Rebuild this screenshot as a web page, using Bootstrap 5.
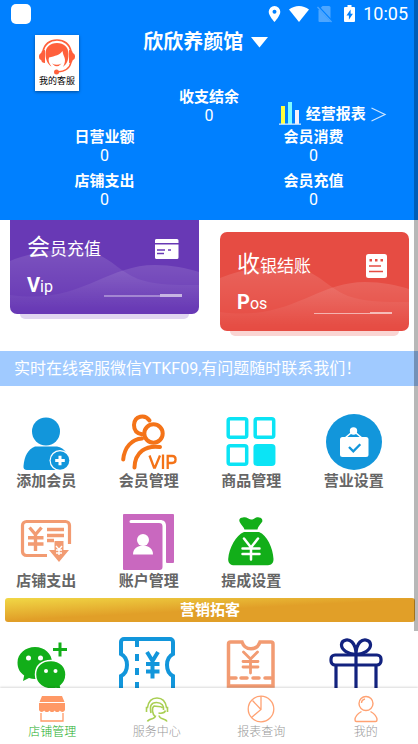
<!DOCTYPE html>
<html lang="zh-CN">
<head>
<meta charset="utf-8">
<meta name="viewport" content="width=device-width, initial-scale=1">
<title>欣欣养颜馆</title>
<link href="https://cdn.jsdelivr.net/npm/bootstrap@5.3.0/dist/css/bootstrap.min.css" rel="stylesheet">
<style>
  body { font-family: Roboto, "Noto Sans CJK SC", sans-serif; background: #fff; }
  svg { display: block; flex: none; overflow: visible; }
  .app-head { background: #0080ff; padding-bottom: 11px; }
  .status-row { height: 28px; padding: 0 10px 0 11px; }
  .app-dot { width: 20px; height: 20px; border-radius: 5px; }
  .clock { font-size: 18px; line-height: 28px; }
  .service-btn { margin: 7px 0 0 35px; width: 44px; height: 56px; box-shadow: 0 1px 3px rgba(0,0,0,.4); font-size: 9px; line-height: 12px; }
  .shop-btn { font-size: 20px; line-height: 28px; }
  .stat-name { font-size: 15px; line-height: 20px; font-weight: 700; }
  .stat-num { font-size: 16px; line-height: 18px; }
  .balance { margin-top: 31px; margin-bottom: 2px; }
  .report-link { font-size: 15px; line-height: 24px; gap: 5px; margin-bottom: 1px; }
  .stats-gap { row-gap: 6px; }

  .promo { padding: 0 9px 20px 10px; column-gap: 21px; }
  .tile { flex: 1 1 0; height: 94px; padding: 0 17px; border-radius: 0 0 7px 7px; background: #6839b5; isolation: isolate; }
  .tile-pos { height: 99px; margin-top: 12px; border-radius: 7px; background: #e64c43; }
  .tile::after { content: ""; position: absolute; left: 10px; right: 10px; bottom: -5px; height: 5px; border-radius: 0 0 5px 5px; background: #e0d6f0; }
  .tile-pos::after { background: #fad5d3; }
  .tile-waves { position: absolute; inset: 0; z-index: -1; }
  .tile-title { font-size: 17px; line-height: 30px; margin-bottom: 8px; }
  .tile-title .initial { font-size: 23px; }
  .tile-sub { font-size: 16px; line-height: 26px; margin-bottom: 14px; }
  .tile-sub .initial { font-size: 20px; font-weight: 700; }

  .notice { background: #a0caff; font-size: 16px; line-height: 35px; padding-left: 14px; }
  .menu-grid { display: grid; grid-template-columns: repeat(4, 1fr); gap: 22px 10px; padding: 28px 18px 6px 0; }
  .menu-grid a { color: #666; font-size: 15px; line-height: 22px; font-weight: 700; }
  .menu-more { padding-top: 16px; }
  .section-bar { margin: 0 3px 0 5px; border-radius: 3px; font-size: 15px; line-height: 24px; background: linear-gradient(177deg, #f1d846 0%, #e19f28 50%); }
  .scroll-thumb { position: absolute; top: 0; right: 0; width: 4px; height: 631px; background: rgba(0,0,0,.28); }

  .tab-row { height: 56px; background: #fff; box-shadow: 0 -1px 2px rgba(0,0,0,.15); z-index: 2; }
  .tab-row a { color: #999; font-size: 12px; line-height: 16px; font-weight: 300; padding-top: 7px; gap: 1px; }
  .tab-row a.current { color: #1aad28; }
</style>
<script src="https://cdn.jsdelivr.net/npm/bootstrap@5.3.0/dist/js/bootstrap.bundle.min.js"></script>
</head>
<body class="vh-100 d-flex flex-column overflow-hidden">
<main class="flex-fill overflow-hidden position-relative">
  <header class="app-head text-white">
    <div class="status-row d-flex align-items-center">
      <span class="app-dot bg-white me-auto"></span>
      <svg width="13" height="18" viewBox="0 0 13 18" fill="#fff"><path fill-rule="evenodd" d="M6.500 1a5.800 5.800 0 0 0-5.800 5.800C.7 11 6.500 17 6.500 17s5.800-6 5.800-10.200A5.800 5.800 0 0 0 6.500 1zm0 3.800a2 2 0 1 1 0 4 2 2 0 0 1 0-4z"/></svg>
      <svg class="ms-2" width="20" height="18" viewBox="0 0 20 18" fill="#fff"><path d="M10 17 0 4.500C6-.3 14-.3 20 4.500z"/></svg>
      <svg class="ms-2" width="15" height="18" viewBox="0 0 15 18"><path d="M5.500 1H12a1.500 1.500 0 0 1 1.500 1.500V16a1 1 0 0 1-1 1h-10a1 1 0 0 1-1-1V5z" fill="#4da6ff"/><path d="M.5 1 14.500 16" stroke="#0080ff" stroke-width="2.500"/><path d="M.5 2 14.500 17" stroke="#4da6ff" stroke-width="1.300"/></svg>
      <svg class="mx-2 ps-1" width="15" height="18" viewBox="0 0 11 18"><path fill="#fff" fill-rule="evenodd" d="M3.500 0h4v2H10a1 1 0 0 1 1 1v13a1 1 0 0 1-1 1H1a1 1 0 0 1-1-1V3a1 1 0 0 1 1-1h2.500zM6.600 4.500 2.500 10.400h2.400v4.400l4-6H6.600z"/></svg>
      <span class="clock">10:05</span>
    </div>
    <div class="row g-0">
      <div class="col-4">
        <button type="button" class="service-btn btn bg-white rounded-0 border-0 p-0 text-black d-flex flex-column align-items-center justify-content-between">
          <svg class="mt-1" width="36" height="36" viewBox="0 0 36 36" fill="#ff603c"><path d="M4 13C5 5 11 1 18 1s13 4 14 12" fill="none" stroke="#ff603c" stroke-width="1.700"/><path d="M6.500 15C6.500 8 11 4 18 4s11.500 4 11.500 11c0 7-2 10-5.500 13 2-4 2.500-7 1.500-9.500C24.700 16.500 24 15 23.500 12 21 16 16 17 10 18.500c-1 3 0 6 2.500 9C9 25.500 6.500 21 6.500 15z"/><path d="M6 11v13c-2.500 0-3.500-1-3.800-3C.4 20.500 0 19 0 17.500S.4 15 2.200 14C2.500 12 3.500 11 6 11zM30 11v13c2.500 0 3.500-1 3.800-3 1.800-.5 2.200-2 2.200-3.500s-.4-2.500-2.200-3.500C33.500 12 32.500 11 30 11z"/><path d="M13 24.500q5 5.500 9.500 0-4.500 2.500-9.500 0z"/><path d="M32 23C31 30 25 32.500 18 33" fill="none" stroke="#ff603c" stroke-width="1.600"/><circle cx="17.500" cy="33" r="2.500"/></svg>
          <span class="pb-1">我的客服</span>
        </button>
      </div>
      <div class="col-4">
        <button type="button" class="shop-btn btn border-0 rounded-0 p-0 ps-1 text-white fw-bold d-flex align-items-center gap-2">欣欣养颜馆
          <svg width="17" height="11" viewBox="0 0 17 11"><path d="M0 0h17L8.500 10.500z" fill="#fff"/></svg>
        </button>
        <div class="balance text-center">
          <div class="stat-name">收支结余</div>
          <div class="stat-num">0</div>
        </div>
      </div>
      <div class="col-4 d-flex align-items-end">
        <a href="#" class="report-link text-white fw-bold text-decoration-none d-flex align-items-center">
          <svg width="22" height="24" viewBox="0 0 22 24"><path fill="#ffff3d" d="M2 4h4v18H2z"/><path fill="#7ffcff" d="M9 0h4v22H9z"/><path fill="#f8f0fa" d="M16 8h4v14h-4z"/><path fill="#d5eaff" d="M0 21.500h22v1.300H0z"/></svg>
          <span>经营报表</span>
          <svg width="15" height="15" viewBox="0 0 15 15"><path d="M.5 1 14 7.500.5 14" fill="none" stroke="#cfe6ff" stroke-width="1.200"/></svg>
        </a>
      </div>
    </div>
    <div class="row g-0 text-center stats-gap">
      <div class="col-6"><div class="stat-name">日营业额</div><div class="stat-num">0</div></div>
      <div class="col-6"><div class="stat-name">会员消费</div><div class="stat-num">0</div></div>
      <div class="col-6"><div class="stat-name">店铺支出</div><div class="stat-num">0</div></div>
      <div class="col-6"><div class="stat-name">会员充值</div><div class="stat-num">0</div></div>
    </div>
  </header>

  <section class="promo d-flex align-items-start">
    <a href="#" class="tile position-relative text-white text-decoration-none d-flex flex-column justify-content-end">
      <svg class="tile-waves w-100 h-100" viewBox="0 0 189 94" preserveAspectRatio="none"><defs><linearGradient id="fade" x1="0" y1="0" x2="0" y2="1"><stop offset="0" stop-color="#fff" stop-opacity=".13"/><stop offset="1" stop-color="#fff" stop-opacity="0"/></linearGradient></defs><path fill="url(#fade)" d="M0 41C25 31 45 29 68 30 98 32 104 49 128 59 148 66 170 65 189 65V88H0z"/><path fill="url(#fade)" d="M0 75C70 85 95 45 145 45 162 45 176 48 189 52V92H0z"/></svg>
      <div class="tile-title d-flex align-items-center justify-content-between">
        <span><span class="initial">会</span>员充值</span>
        <svg width="27" height="22" viewBox="0 0 27 22"><path fill="#fff" d="M2 1h20a1.500 1.500 0 0 1 1.500 1.500V5H0V2.500A1.500 1.500 0 0 1 2 1zM0 6.500h23.500v13A1.500 1.500 0 0 1 22 21H2a1.500 1.500 0 0 1-2-1.500z"/><path stroke="#6839b5" stroke-width="1.500" d="M2 12h8M13 12h3M2 15.500h7"/></svg>
      </div>
      <div class="tile-sub d-flex align-items-end justify-content-between">
        <span><span class="initial">V</span>ip</span>
        <svg width="78" height="10" viewBox="0 0 78 10"><path fill="#fff" fill-opacity=".35" d="M0 5h56v2H0z"/><path fill="#fff" fill-opacity=".6" d="M56 4h22v3H56z"/></svg>
      </div>
    </a>
    <a href="#" class="tile tile-pos position-relative text-white text-decoration-none d-flex flex-column justify-content-end">
      <svg class="tile-waves w-100 h-100" viewBox="0 0 189 99" preserveAspectRatio="none"><path fill="url(#fade)" d="M0 46C25 36 45 34 68 35 98 37 104 54 128 64 148 71 170 70 189 70V93H0z"/><path fill="url(#fade)" d="M0 80C70 90 95 50 145 50 162 50 176 53 189 57V97H0z"/></svg>
      <div class="tile-title d-flex align-items-center justify-content-between">
        <span><span class="initial">收</span>银结账</span>
        <svg width="26" height="24" viewBox="0 0 26 24"><rect width="21" height="24" rx="2.500" fill="#fff"/><path stroke="#e64c43" stroke-width="1.500" d="M3 12h12M3 17.500h14"/><path fill="#e64c43" d="M3.500 5h2.500v2.500H3.500zM9 5h2.500v2.500H9zM14.500 5H17v2.500h-2.500z"/></svg>
      </div>
      <div class="tile-sub d-flex align-items-end justify-content-between">
        <span><span class="initial">P</span>os</span>
        <svg width="78" height="10" viewBox="0 0 78 10"><path fill="#fff" fill-opacity=".55" d="M0 6h56v1H0z"/><path fill="#fff" fill-opacity=".6" d="M56 5h22v2H56z"/></svg>
      </div>
    </a>
  </section>

  <div class="notice text-white text-nowrap">实时在线客服微信YTKF09,有问题随时联系我们！</div>

  <nav class="menu-grid" aria-label="店铺功能">
    <a href="#" class="text-decoration-none d-flex flex-column align-items-center">
      <svg width="56" height="56" viewBox="0 0 56 56"><circle cx="28" cy="17.500" r="14" fill="#1296db"/><path fill="#1296db" d="M17 32.500h22c4 .5 7 2.500 9 6l-8 17.500H9c-2.500 0-3.800-1.500-3.500-4C6.500 42 10 35 17 32.500z"/><circle cx="42" cy="46.500" r="10.500" fill="#fff"/><circle cx="42" cy="46.500" r="9.300" fill="#1296db"/><path stroke="#fff" stroke-width="3" d="M42 41.700v9.600M37.200 46.500h9.600"/></svg>
      <span>添加会员</span>
    </a>
    <a href="#" class="text-decoration-none d-flex flex-column align-items-center">
      <svg width="56" height="56" viewBox="0 0 56 56" fill="none" stroke="#f47318" stroke-width="4"><path d="M28.500 6.500C24 0 13.500 1.500 13 11c0 5 3 8.500 8 9.300M21 24.500C11 25 3.500 33 2.200 45.500" stroke-linecap="round"/><circle cx="32.500" cy="19.500" r="9.200"/><path d="M39 33C25 31 14 38 13.500 53.500" stroke-linecap="round"/><path d="m28.500 41.500 4.500 12h1l5-12M42 40.500V55M46.700 55V42h4.500c4.500 0 4.500 7 0 7h-4.500" stroke-width="2.300"/></svg>
      <span>会员管理</span>
    </a>
    <a href="#" class="text-decoration-none d-flex flex-column align-items-center">
      <svg width="56" height="56" viewBox="0 0 56 56" fill="none" stroke="#0be4f5" stroke-width="3.500"><rect x="5.200" y="4.700" width="18.500" height="18.500" rx="2"/><rect x="32.200" y="4.700" width="18.500" height="18.500" rx="2"/><rect x="5.200" y="31.700" width="18.500" height="18.500" rx="2"/><rect x="32.200" y="31.700" width="18.500" height="18.500" rx="2" fill="#0be4f5"/></svg>
      <span>商品管理</span>
    </a>
    <a href="#" class="text-decoration-none d-flex flex-column align-items-center">
      <svg width="56" height="56" viewBox="0 0 56 56"><circle cx="28" cy="28" r="28" fill="#1296db"/><rect x="14" y="23" width="28.500" height="20" rx="2.500" fill="#fff"/><circle cx="27.500" cy="17" r="3.700" fill="#fff"/><path d="m19 24 8.500-7L36 24" fill="none" stroke="#fff" stroke-width="1.600"/><path d="m23 33 4.300 4.300 7-7" fill="none" stroke="#1296db" stroke-width="2.300"/></svg>
      <span>营业设置</span>
    </a>
    <a href="#" class="text-decoration-none d-flex flex-column align-items-center">
      <svg width="56" height="56" viewBox="0 0 56 56" fill="none" stroke="#f29b72" stroke-width="3.200"><path d="M29 41.500H8.500a4 4 0 0 1-4-4v-26a4 4 0 0 1 4-4h39a4 4 0 0 1 4 4V30"/><path d="m11.500 13.500 6 7 6-7M17.500 20v17M10 23.700h15.500M10 30h15.500M29 15.500h17M29 21.500h17M29 26.500h7" stroke-width="3.400"/><path d="M36.500 27h9v9H51L41 48 31 36h5.500z" fill="#f29b72" stroke="none"/><path d="m38 32 3 3.500 3-3.500M41 35v6M38 36h6M38 39h6" stroke="#fff" stroke-width="1.400"/></svg>
      <span>店铺支出</span>
    </a>
    <a href="#" class="text-decoration-none d-flex flex-column align-items-center">
      <svg width="56" height="56" viewBox="0 0 56 56"><path fill="#c968bf" d="M3 0h49a1 1 0 0 1 1 1v47a1 1 0 0 1-1 1h-6a1 1 0 0 1-1-1V12c0-4-2-6-6-6H10a1.500 1.500 0 0 0 0 3h28c2.500 0 3.500 1 3.500 3.500V53a3 3 0 0 1-3 3H3a1 1 0 0 1-1-1V1a1 1 0 0 1 1-1z"/><circle cx="22" cy="26" r="6" fill="#fff"/><path d="M12 40.500C12 35 16 31.500 22 31.500S32 35 32 40.500z" fill="#fff"/></svg>
      <span>账户管理</span>
    </a>
    <a href="#" class="text-decoration-none d-flex flex-column align-items-center">
      <svg width="56" height="56" viewBox="0 0 56 56"><path fill="#12ae19" d="M20 3.500c4-1 5 2 8 2s5-3 8-2c3 0 4 3 3 4.500-2 3-4.500 5-4.500 7.500H21.500C21 13 18 11 16.700 8 15.500 5.500 17 3.500 20 3.500zM21 18h15c8 3 14 16 14.500 27 0 4-2 6.200-5.500 6.200H11.500C7.500 51.200 5 49 5.200 45 6 34 13 21 21 18z"/><path d="m21 24.500 7 9 7-9M28 33v12.500M19.500 34.500h17M19.500 40h17" fill="none" stroke="#fff" stroke-width="2.500" stroke-linecap="round"/></svg>
      <span>提成设置</span>
    </a>
  </nav>

  <h2 class="section-bar text-white text-center fw-bold">营销拓客</h2>

  <nav class="menu-grid menu-more pb-0" aria-label="营销拓客">
    <a href="#" class="d-flex justify-content-center" aria-label="微信">
      <svg width="56" height="56" viewBox="0 0 56 56"><path fill="#12ae19" d="M17 9c9.500 0 17 6.500 17 15.500S26.500 41 17 41c-2 0-4-.3-6-1l-6 3 1.200-5.500C2 34.500-.5 30.500-.5 24.500-.5 15.500 7.500 9 17 9zM40.500 4.500h3v5.500h5.500v3h-5.500v5.500h-3V13H35v-3h5.500z"/><circle cx="10.500" cy="20" r="2.500" fill="#fff"/><circle cx="22.500" cy="20" r="2.500" fill="#fff"/><path fill="#12ae19" stroke="#fff" stroke-width="1.500" d="M33 22.500c9 0 15 6 15 14 0 5-2.500 9-5.500 11.500l1.500 5-6-2.500C26 53 17.500 45.500 17.500 36.500s6.500-14 15.500-14z"/><circle cx="28" cy="33" r="2" fill="#fff"/><circle cx="37.500" cy="33" r="2" fill="#fff"/></svg>
    </a>
    <a href="#" class="d-flex justify-content-center" aria-label="代金券">
      <svg width="56" height="56" viewBox="0 0 56 56" fill="none" stroke="#1296db" stroke-width="4"><path d="M0 16V4a3 3 0 0 1 3-3h46a3 3 0 0 1 3 3v12c-8 4-8 18 0 22v13a3 3 0 0 1-3 3H3a3 3 0 0 1-3-3V38c8-4 8-18 0-22z"/><path d="M16 1v8M16 16v7M16 30v7M16 44v8"/><path d="m26 14 5.500 9 5.500-9M31.500 23v17.500M25 26h13.500M25 33.500h13.500"/></svg>
    </a>
    <a href="#" class="d-flex justify-content-center" aria-label="优惠券">
      <svg width="56" height="56" viewBox="0 0 56 56" fill="none" stroke="#f29b72" stroke-width="3.500"><path d="M5.500 48V6a2 2 0 0 1 2-2H19c3 9 15 9 18 0h11a2 2 0 0 1 2 2V48z"/><path d="m20.500 14 7 7 7-7M27.500 20.500V35M20 23.500h15M20 29h15" stroke-width="2.800" stroke-linecap="round"/><path d="M7 40h6M18 40h6M30 40h6M42 40h6" stroke-linecap="round"/></svg>
    </a>
    <a href="#" class="d-flex justify-content-center" aria-label="礼品">
      <svg width="56" height="56" viewBox="0 0 56 56" fill="none" stroke="#12227f" stroke-width="3.200"><rect x="5" y="17" width="50" height="10" rx="4"/><path d="M10 27v29M50 27v29M30 17v39M30 16.500C23 16.500 15 12 15.500 6.500 16 1 23 1 26 4s4 8 4 12.500zM30 16.500c7 0 15-4.500 14.500-10C44 1 37 1 34 4s-4 8-4 12.500z"/></svg>
    </a>
  </nav>
  <div class="scroll-thumb"></div>
</main>

<nav class="tab-row row g-0 text-center flex-shrink-0" aria-label="主导航">
  <a href="#" class="current col-3 text-decoration-none d-flex flex-column align-items-center" aria-current="page">
    <svg width="28" height="28" viewBox="0 0 28 28"><path fill="#ff9966" d="M4 1h20l2.500 6H1.500zM1 8h26v7c-1 2.500-4 2.500-5.200.5-1 2-4 2-5.200 0-1 2-4 2-5.200 0-1 2-4 2-5.200 0-1.200 2-4.200 2-5.200-.5z"/><path d="M3 18v8h22v-8" fill="none" stroke="#ff9966" stroke-width="1.300"/></svg>
    <span>店铺管理</span>
  </a>
  <a href="#" class="col-3 text-decoration-none d-flex flex-column align-items-center">
    <svg width="28" height="28" viewBox="0 0 28 28" fill="none" stroke="#a9cf53" stroke-width="1.600"><path d="M3.500 17V12.500h1C5.500 6 9 3 14 3s8.500 3 9.500 9.500h1V17M8 18C6.500 11 8 7.500 13.500 7.500S21 11 20.500 15"/><path d="M12.500 22C9 19 8.500 13 11 11c4 1 8 0 8.500 2M4.500 26.500c1-3.500 8-1.500 8-6M24 26.500c-1-3.500-7.500-1.500-8-6M22.500 15.500c-1 3-4 3-7 2.500"/></svg>
    <span>服务中心</span>
  </a>
  <a href="#" class="col-3 text-decoration-none d-flex flex-column align-items-center">
    <svg width="28" height="28" viewBox="0 0 28 28" fill="none" stroke="#ffa273" stroke-width="1.300"><circle cx="14" cy="14" r="12.800"/><path d="M14 1v13.500L4.500 22.500M14 14.500 5.500 5.500"/></svg>
    <span>报表查询</span>
  </a>
  <a href="#" class="col-3 text-decoration-none d-flex flex-column align-items-center">
    <svg width="28" height="28" viewBox="0 0 28 28" fill="none" stroke="#ffa273" stroke-width="1.400"><circle cx="14" cy="8.500" r="7"/><path d="M9.500 8c0-2 1.500-3.500 3.500-4M9.500 16.500C5 19 3 22.500 3 25c0 1 .5 1.500 1.500 1.500h19c1 0 1.500-.5 1.500-1.500 0-2.500-2-6-6.500-8.500"/></svg>
    <span>我的</span>
  </a>
</nav>
</body>
</html>
